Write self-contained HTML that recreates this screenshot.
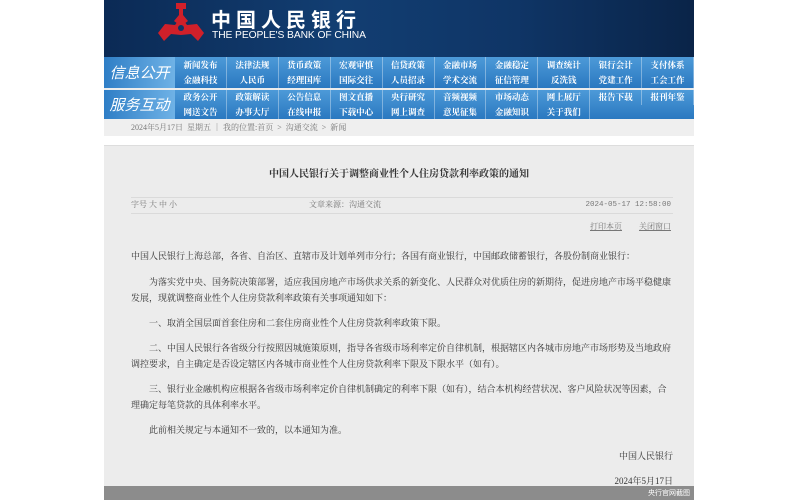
<!DOCTYPE html>
<html><head><meta charset="utf-8"><style>
*{margin:0;padding:0;box-sizing:border-box}
body{width:800px;height:500px;background:#fff;position:relative;overflow:hidden;font-family:"Liberation Serif","Noto Serif CJK SC",serif;}
.wrap{position:absolute;left:104px;top:0;width:590px;height:500px;background:#ececec}
.hdr{position:absolute;left:0;top:0;width:590px;height:57px;background:linear-gradient(90deg,#0b2a55,#123e72 40%,#0f3566 70%,#0a2448)}
.cn{position:absolute;left:107px;top:4px;color:#fff;font:bold 20px "Noto Sans CJK SC",sans-serif;letter-spacing:5px}
.en{position:absolute;left:108px;top:30px;color:#fff;font:10.3px "Liberation Sans",sans-serif;letter-spacing:-.1px}
.row{position:absolute;left:0;width:590px;background:linear-gradient(#4d9ad8,#2a78c0);}
.lab{position:absolute;left:0;top:0;width:71px;height:100%;background:linear-gradient(90deg,#2f7ec6,#6fb2e6);color:#fff;font:italic 15px "Noto Sans CJK SC",sans-serif;display:flex;align-items:center;justify-content:center}
.cells{position:absolute;left:71px;top:0;width:519px;height:100%;display:grid;grid-template-columns:repeat(10,1fr);grid-template-rows:1fr 1fr}
.cells div{color:#fff;font:bold 8.5px "Noto Serif CJK SC",serif;display:flex;align-items:center;justify-content:center;border-right:1px solid rgba(255,255,255,.35)}
.bc{position:absolute;left:0;top:119px;width:590px;height:17px;background:#efefef;color:#777;font-size:8px;padding-left:27px;line-height:17px}
.wl{position:absolute;left:0;top:136px;width:590px;height:10px;background:#fff;border-bottom:1px solid #ddd}
.t{position:absolute;top:165px;left:0;width:590px;text-align:center;font:bold 10px "Noto Serif CJK SC",serif;color:#333}
.ln{position:absolute;left:27px;width:542px;height:1px;background:#dadada}
.sm{position:absolute;font-size:8px;color:#777}
.p{position:absolute;left:27px;width:562px;font-size:9px;line-height:15.5px;color:#333}
.bar{position:absolute;left:0;top:486px;width:590px;height:14px;background:#8c8c8c;color:#fff;font:7px "Noto Sans CJK SC",sans-serif;text-align:right;padding-right:4px;line-height:14px}
</style></head><body><div class="wrap">
<div class="hdr">
<svg style="position:absolute;left:54px;top:3px" width="46" height="40" viewBox="0 0 46 40"><g fill="#d0202a"><path d="M18 0h10v6h-3v6l5 6-4 3-3-4-3 4-4-3 5-6V6h-3z"/><path d="M23 14l6 8 10-1 7 9-6 8-7-7-10 1-10-1-7 7-6-8 7-9 10 1z"/><circle cx="23" cy="25" r="3" fill="#0f3566"/></g></svg>
<div class="cn">中国人民银行</div>
<div class="en">THE PEOPLE'S BANK OF CHINA</div>
</div>
<div class="row" style="top:57px;height:31px"><div class="lab">信息公开</div><div class="cells">
<div>新闻发布</div><div>法律法规</div><div>货币政策</div><div>宏观审慎</div><div>信贷政策</div><div>金融市场</div><div>金融稳定</div><div>调查统计</div><div>银行会计</div><div>支付体系</div>
<div>金融科技</div><div>人民币</div><div>经理国库</div><div>国际交往</div><div>人员招录</div><div>学术交流</div><div>征信管理</div><div>反洗钱</div><div>党建工作</div><div>工会工作</div></div></div>
<div class="row" style="top:90px;height:29px"><div class="lab">服务互动</div><div class="cells">
<div>政务公开</div><div>政策解读</div><div>公告信息</div><div>图文直播</div><div>央行研究</div><div>音频视频</div><div>市场动态</div><div>网上展厅</div><div>报告下载</div><div>报刊年鉴</div>
<div>网送文告</div><div>办事大厅</div><div>在线申报</div><div>下载中心</div><div>网上调查</div><div>意见征集</div><div>金融知识</div><div>关于我们</div><div style="border:0"></div><div style="border:0"></div></div></div>
<div class="bc">2024年5月17日&nbsp; 星期五 ｜ 我的位置:首页 &nbsp;&gt;&nbsp; 沟通交流 &nbsp;&gt;&nbsp; 新闻</div>
<div class="wl"></div>
<div class="t">中国人民银行关于调整商业性个人住房贷款利率政策的通知</div>
<div class="ln" style="top:197px"></div>
<div class="sm" style="left:27px;top:199px">字号 大 中 小</div>
<div class="sm" style="left:205px;top:199px">文章来源：沟通交流</div>
<div class="sm" style="right:23px;top:199px;font:7.5px 'Liberation Mono',monospace;line-height:12px">2024-05-17 12:58:00</div>
<div class="ln" style="top:213px"></div>
<div class="sm" style="left:486px;top:221px;text-decoration:underline">打印本页</div>
<div class="sm" style="left:535px;top:221px;text-decoration:underline">关闭窗口</div>
<div class="p" style="top:249px">中国人民银行上海总部，各省、自治区、直辖市及计划单列市分行；各国有商业银行，中国邮政储蓄银行，各股份制商业银行：</div>
<div class="p" style="top:275px;text-indent:18px">为落实党中央、国务院决策部署，适应我国房地产市场供求关系的新变化、人民群众对优质住房的新期待，促进房地产市场平稳健康<br>发展，现就调整商业性个人住房贷款利率政策有关事项通知如下：</div>
<div class="p" style="top:316px;text-indent:18px">一、取消全国层面首套住房和二套住房商业性个人住房贷款利率政策下限。</div>
<div class="p" style="top:341px;text-indent:18px">二、中国人民银行各省级分行按照因城施策原则，指导各省级市场利率定价自律机制，根据辖区内各城市房地产市场形势及当地政府<br>调控要求，自主确定是否设定辖区内各城市商业性个人住房贷款利率下限及下限水平（如有）。</div>
<div class="p" style="top:382px;text-indent:18px">三、银行业金融机构应根据各省级市场利率定价自律机制确定的利率下限（如有），结合本机构经营状况、客户风险状况等因素，合<br>理确定每笔贷款的具体利率水平。</div>
<div class="p" style="top:423px;text-indent:18px">此前相关规定与本通知不一致的，以本通知为准。</div>
<div class="p" style="top:449px;width:542px;text-align:right">中国人民银行</div>
<div class="p" style="top:474px;width:542px;text-align:right">2024年5月17日</div>
<div class="bar">央行官网截图</div>
</div></body></html>
